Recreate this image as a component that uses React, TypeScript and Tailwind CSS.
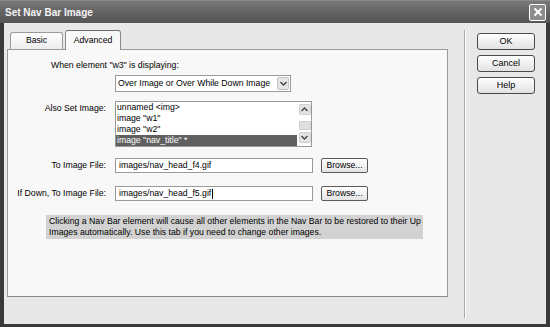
// Set Nav Bar Image dialog (grayscale XP style)

const font = { fontFamily: '"Liberation Sans", Arial, sans-serif' };

function Chevron({ up = false }: { up?: boolean }) {
  return (
    <svg width="7" height="5" viewBox="0 0 7 5">
      <path
        d={up ? "M0.5 4 L3.5 1 L6.5 4" : "M0.5 1 L3.5 4 L6.5 1"}
        fill="none"
        stroke="#444"
        strokeWidth="1.4"
      />
    </svg>
  );
}

function Browse() {
  return (
    <button
      type="button"
      className="ml-[8px] flex h-[15px] w-[47px] items-center justify-center rounded-[2px] border border-[#5a5a5a] bg-gradient-to-b from-white to-[#e4e4e4] text-[8.7px] text-black"
    >
      Browse...
    </button>
  );
}

function DialogButton({ label }: { label: string }) {
  return (
    <button
      type="button"
      className="flex h-[17px] w-[58px] items-center justify-center rounded-[3px] border border-[#4a4a4a] bg-gradient-to-b from-white to-[#e2e2e2] text-[9px] text-black"
    >
      {label}
    </button>
  );
}

export default function App() {
  return (
    <div
      style={font}
      className="flex h-[327px] w-[550px] flex-col overflow-hidden bg-[#3a3a3a] text-black"
    >
      {/* Title bar */}
      <div className="flex h-[23px] items-center justify-between border-t border-[#8a8a8a] bg-gradient-to-b from-[#7a7a7a] via-[#636363] to-[#555555] pl-[5px] pr-[4px]">
        <span className="text-[10px] font-bold text-[#f4f4f4]">
          Set Nav Bar Image
        </span>
        <div className="flex h-[17px] w-[17px] items-center justify-center rounded-[2px] border border-white bg-[#8c8c8c]">
          <svg width="10" height="10" viewBox="0 0 10 10">
            <path d="M1.5 1.5 L8.5 8.5 M8.5 1.5 L1.5 8.5" stroke="white" strokeWidth="2" />
          </svg>
        </div>
      </div>

      {/* Body */}
      <div className="mx-[4px] mb-[3px] flex flex-1 bg-[#e8e8e8]">
        {/* Tabs + panel */}
        <div className="flex w-[444px] flex-col pl-[3px] pt-[7px]">
          <div className="flex h-[19px] items-end pl-[3px] text-[8.7px]">
            <div className="flex h-[17px] w-[53px] items-center justify-center rounded-t-[3px] border border-b-0 border-[#9a9a9a] bg-gradient-to-b from-white to-[#ececec]">
              Basic
            </div>
            <div className="relative z-10 -mb-px ml-[2px] flex h-[20px] w-[56px] items-center justify-center rounded-t-[3px] border border-b-0 border-[#8a8a8a] border-t-[#6a6a6a] bg-[#f8f8f8]">
              Advanced
            </div>
          </div>

          <div className="flex h-[248px] w-[441px] flex-col border border-[#9a9a9a] border-b-[#8a8a8a] bg-[#f8f8f8] pl-[1px] text-[8.7px]">
            <div className="mt-[9px] pl-[42px] leading-[12px]">
              When element "w3" is displaying:
            </div>

            {/* Select */}
            <div className="ml-[106px] mt-[4px] flex h-[17px] w-[176px] items-center justify-between border border-[#9a9a9a] bg-white pl-[2px] pr-[1px]">
              <span>Over Image or Over While Down Image</span>
              <div className="flex h-[13px] w-[12px] items-center justify-center rounded-[2px] border border-[#c4c4c4] bg-[#e6e6e6]">
                <Chevron />
              </div>
            </div>

            {/* Also set image */}
            <div className="mt-[9px] flex">
              <div className="w-[97px] pt-[2px] text-right leading-[11px]">Also Set Image:</div>
              <div className="ml-[9px] flex h-[46px] w-[197px] border border-[#9a9a9a] bg-white">
                <div className="flex flex-1 flex-col leading-[11px]">
                  <div className="h-[11px] pl-[1px]">unnamed &lt;img&gt;</div>
                  <div className="h-[11px] pl-[1px]">image "w1"</div>
                  <div className="h-[11px] pl-[1px]">image "w2"</div>
                  <div className="h-[11px] bg-[#606060] pl-[1px] text-white">image "nav_title" *</div>
                </div>
                <div className="ml-[1px] flex w-[13px] flex-col items-center py-[2px]">
                  <div className="flex h-[11px] w-[12px] items-center justify-center rounded-[2px] border border-[#cfcfcf] bg-[#e4e4e4]">
                    <Chevron up />
                  </div>
                  <div className="mt-[6px] h-[9px] w-[12px] rounded-[1px] border border-[#cfcfcf] bg-[#e0e0e0]" />
                  <div className="mt-[2px] flex h-[11px] w-[12px] items-center justify-center rounded-[2px] border border-[#cfcfcf] bg-[#e4e4e4]">
                    <Chevron />
                  </div>
                </div>
              </div>
            </div>

            {/* To image file */}
            <div className="mt-[11px] flex items-center">
              <div className="w-[97px] text-right">To Image File:</div>
              <div className="ml-[9px] flex h-[15px] w-[198px] items-center border border-[#9a9a9a] bg-white pl-[3px]">
                images/nav_head_f4.gif
              </div>
              <Browse />
            </div>

            <div className="mt-[13px] flex items-center">
              <div className="w-[97px] text-right">If Down, To Image File:</div>
              <div className="ml-[9px] flex h-[15px] w-[198px] items-center border border-[#9a9a9a] bg-white pl-[3px]">
                images/nav_head_f5.gif<span className="ml-px inline-block h-[10px] w-px bg-black" />
              </div>
              <Browse />
            </div>

            {/* Note */}
            <div className="ml-[37px] mt-[14px] h-[24px] w-[377px] bg-[#d2d2d2] pl-[3px] pt-[1px] leading-[11px]">
              Clicking a Nav Bar element will cause all other elements in the Nav Bar to be restored to their Up
              <br />
              Images automatically. Use this tab if you need to change other images.
            </div>
          </div>
        </div>

        {/* Separator */}
        <div className="mb-[6px] ml-[16px] mt-[7px] w-[2px] border-l border-r border-l-[#a8a8a8] border-r-white" />

        {/* Buttons */}
        <div className="ml-[11px] flex flex-col gap-[5px] pt-[10px]">
          <DialogButton label="OK" />
          <DialogButton label="Cancel" />
          <DialogButton label="Help" />
        </div>
      </div>
    </div>
  );
}
